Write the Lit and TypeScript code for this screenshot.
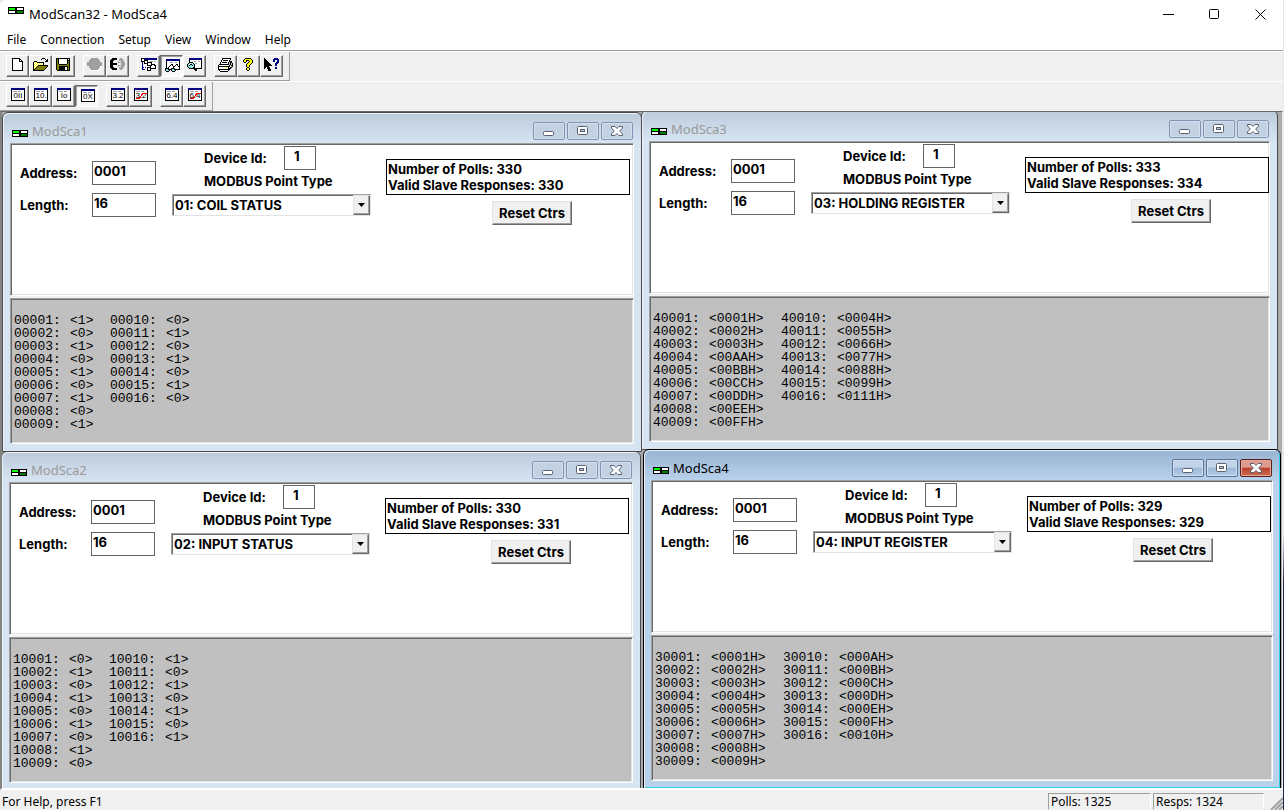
import { LitElement, html, svg, css } from "lit";
import { customElement, property } from "lit/decorators.js";
import { classMap } from "lit/directives/class-map.js";

const PALETTE: Record<string, string> = {
  k: "#000000", w: "#ffffff", n: "#000080", g: "#a0a0a0", l: "#c0c0c0",
  y: "#ffff00", o: "#808000", r: "#ff0000", c: "#80e0e0",
};

/* Turns rows of palette keys into runs of one-pixel-high rectangles. */
function bitmap(rows: string[]) {
  const runs: unknown[] = [];
  rows.forEach((row, y) => {
    let x = 0;
    while (x < row.length) {
      const key = row[x];
      let end = x + 1;
      while (end < row.length && row[end] === key) end++;
      if (PALETTE[key]) {
        runs.push(svg`<rect x=${x} y=${y} width=${end - x} height="1" fill=${PALETTE[key]}></rect>`);
      }
      x = end;
    }
  });
  return html`<svg width="16" height="16" viewBox="0 0 16 16" shape-rendering="crispEdges" aria-hidden="true">${runs}</svg>`;
}

const BITMAPS: Record<string, string[]> = {
  new: [
    "..kkkkkkkk......",
    "..kwwwwwwkk.....",
    "..kwwwwwwkwk....",
    "..kwwwwwwkkkk...",
    "..kwwwwwwwwwk...",
    "..kwwwwwwwwwk...",
    "..kwwwwwwwwwk...",
    "..kwwwwwwwwwk...",
    "..kwwwwwwwwwk...",
    "..kwwwwwwwwwk...",
    "..kwwwwwwwwwk...",
    "..kwwwwwwwwwk...",
    "..kkkkkkkkkkk...",
  ],
  open: [
    ".........kkk....",
    "........k...k.k.",
    ".............kk.",
    ".kkk........kkk.",
    "kywykkkkkkk.....",
    "kwywywywywk.....",
    "kywywywywyk.....",
    "kwywykkkkkkkkkk.",
    "kywykoooooooook.",
    "kwykoooooooook..",
    "kykoooooooook...",
    "kkoooooooook....",
    "kkkkkkkkkkk.....",
  ],
  save: [
    "kkkkkkkkkkkkkk..",
    "kokwwwwwwwwkwk..",
    "kokwwwwwwwwkkk..",
    "kokwwwwwwwwkok..",
    "kokwwwwwwwwkok..",
    "kokwwwwwwwwkok..",
    "kookkkkkkkkook..",
    "kooooooooooook..",
    "kookkkkkkkkkok..",
    "kookkkkkkwwkok..",
    "kookkkkkkwwkok..",
    "kookkkkkkwwkok..",
    ".kkkkkkkkkkkkk..",
  ],
  connect: [
    "....ggggggg.....",
    "...ggggggggg....",
    "..ggggggggggg...",
    "..gggggggggggw..",
    "ggggggggggggggg.",
    "ggggggggggggggg.",
    "ggggggggggggggg.",
    "ggggggggggggggg.",
    "..gggggggggggww.",
    "..gggggggggggw..",
    "...gggggggggww..",
    "....gggggggww...",
    ".....wwwwwww....",
  ],
  disconnect: [
    "..kkkkk...gg....",
    ".kkkkkk..gggg...",
    "kkkk.....ggggg..",
    "kkk.....g..ggg..",
    "kkk.....ggggggg.",
    "kkkkkkk....gggg.",
    "kkkkkkk....gggg.",
    "kkk.....ggggggg.",
    "kkk.....g..ggg..",
    "kkkk.....ggggg..",
    ".kkkkkk..gggg...",
    "..kkkkk...gg....",
  ],
  point: [
    "kkkknnnnnnnnnnnn",
    "kwwknnnnnnnnnnnn",
    "kwwkkkkwwwwwwwww",
    "kkkkwwkwwgggwggw",
    ".n.kwwkkkkkwwwww",
    ".n.kkkkwwwkwwwww",
    ".n.w.wkwwwkkkkww",
    ".n.w.wkkkkkwwkkw",
    ".n.w.w.w.kwwwwkw",
    ".nnwnwkkkkwwwwkw",
    ".n.w.wkwwkkkkkkw",
    ".nnn.wkwwk......",
    "......kkkk......",
  ],
  watch: [
    ".nnnnnnnnnnnnnn.",
    ".nnnnnnnnnnnnnn.",
    ".kwwwwwwwwwwwwk.",
    ".kwwwgggwwggwwk.",
    ".kwwwwwwwwwwwwk.",
    ".kwwwwkkwwwkkwk.",
    ".kwwwkwkwwkwkwk.",
    ".kwwkwwwkkwwwkk.",
    ".kwkwwwwkwwwwwk.",
    "kkkkwwkkkkwwwwk.",
    "kcckkkkcckkkkkk.",
    "kccck.kccck.....",
    ".kkk...kkk......",
  ],
  inspect: [
    "..nnnnnnnnnnnnn.",
    "..nnnnnnnnnnnnn.",
    "..kwwwwwwwwwwwk.",
    "..kwwwwggwwggwk.",
    "..kkkkwwwwwwwwk.",
    ".kcwcckwggwwwwk.",
    "kcwkkcckwwwwwwk.",
    "kckcckckwwwwwwk.",
    "kccccwckwwwwwwk.",
    ".kccwckkwwwwwwk.",
    "..kkkkkkkkkkkkk.",
    ".......kkk......",
    "........kk......",
  ],
  print: [
    "....kkkkkkkkk...",
    "....kwwwwwwwk...",
    "...kwkkkkkwk....",
    "...kwwwwwwwkkk..",
    "..kwkkkkkwklkk..",
    "..kwwwwwwwklklk.",
    ".kkkkkkkkkklklk.",
    "kwwwwwwwwwwklkk.",
    "kkkkkkkkkkkkwlk.",
    "kwwwwwwyywkwkk..",
    "kwwwwwwwwwkkk...",
    "kkkkkkkkkkkk....",
    ".kwwwwwwwwk.....",
    "..kkkkkkkk......",
  ],
  about: [
    "....kkkkkk......",
    "...kyyyyyyk.....",
    "..kyykkkyyyk....",
    "..kyyk..kyyk....",
    "...kk..kyyyk....",
    "......kyyyk.....",
    ".....kyyyk......",
    ".....kyyk.......",
    ".....kyyk.......",
    "......kk........",
    ".....kyyk.......",
    ".....kyyk.......",
    "......kk........",
  ],
  context: [
    "k.........nnnn..",
    "kk.......nnnnnn.",
    "kkk......nn..nn.",
    "kkkk.....nn..nn.",
    "kkkkk.......nnn.",
    "kkkkkk.....nnn..",
    "kkkkkkk....nn...",
    "kkkkkkkk...nn...",
    "kkkkk...........",
    "kk.kkk.....nn...",
    "k..kkk.....nn...",
    "....kkk.........",
    "....kkk.........",
  ],
};

/* A small data window carrying a caption of the number format. */
function formatIcon(caption: string, struck = false) {
  return html`<svg width="16" height="16" viewBox="0 0 16 16" shape-rendering="crispEdges" aria-hidden="true">
    <rect x="1" y="0" width="14" height="13" fill="#000000"></rect>
    <rect x="2" y="2" width="12" height="10" fill="#ffffff"></rect>
    <rect x="1" y="0" width="14" height="2" fill="#000080"></rect>
    <rect x="3" y="3" width="4" height="1" fill="#a0a0a0"></rect>
    <rect x="8" y="3" width="3" height="1" fill="#a0a0a0"></rect>
    <text class="caption" x="8" y="10" text-anchor="middle">${caption}</text>
    ${struck ? svg`<path d="M3 10.5H6L10 5.5H14" stroke="#ff0000" stroke-width="1.3" fill="none"></path>` : null}
  </svg>`;
}

const logo = html`<svg class="logo" width="16" height="7" viewBox="0 0 16 7" shape-rendering="crispEdges" aria-hidden="true">
  <rect width="16" height="7" fill="#000000"></rect>
  <rect x="1" y="1" width="6" height="2" fill="#00ff00"></rect>
  <rect x="1" y="4" width="6" height="2" fill="#ffffff"></rect>
  <rect x="9" y="1" width="6" height="2" fill="#ffffff"></rect>
  <rect x="9" y="4" width="6" height="2" fill="#008000"></rect>
</svg>`;

interface Tool { name: string; icon: unknown; pressed?: boolean; disabled?: boolean }

const STANDARD: Tool[][] = [
  [
    { name: "New", icon: bitmap(BITMAPS.new) },
    { name: "Open", icon: bitmap(BITMAPS.open) },
    { name: "Save", icon: bitmap(BITMAPS.save) },
  ],
  [
    { name: "Connect", icon: bitmap(BITMAPS.connect), disabled: true },
    { name: "Disconnect", icon: bitmap(BITMAPS.disconnect) },
  ],
  [
    { name: "Data definition", icon: bitmap(BITMAPS.point) },
    { name: "Show data", icon: bitmap(BITMAPS.watch), pressed: true },
    { name: "Show traffic", icon: bitmap(BITMAPS.inspect) },
  ],
  [
    { name: "Print", icon: bitmap(BITMAPS.print) },
    { name: "About", icon: bitmap(BITMAPS.about) },
    { name: "Context help", icon: bitmap(BITMAPS.context) },
  ],
];

const FORMATS: Tool[][] = [
  [
    { name: "Binary", icon: formatIcon("0II") },
    { name: "Decimal", icon: formatIcon("10.") },
    { name: "Integer", icon: formatIcon("Io") },
    { name: "Hex", icon: formatIcon("0X"), pressed: true },
  ],
  [
    { name: "Floating point", icon: formatIcon("3.2") },
    { name: "Swapped floating point", icon: formatIcon("3.2", true) },
  ],
  [
    { name: "Double precision", icon: formatIcon("6.4") },
    { name: "Swapped double precision", icon: formatIcon("6.4", true) },
  ],
];

const POINT_TYPES = ["01: COIL STATUS", "02: INPUT STATUS", "03: HOLDING REGISTER", "04: INPUT REGISTER"];

interface Session {
  title: string; type: number; polls: number; responses: number;
  base: number; values: string[]; place: string; active?: boolean;
}

const SESSIONS: Session[] = [
  { title: "ModSca3", type: 2, polls: 333, responses: 334, base: 40001, place: "upper-right",
    values: "0001H 0002H 0003H 00AAH 00BBH 00CCH 00DDH 00EEH 00FFH 0004H 0055H 0066H 0077H 0088H 0099H 0111H".split(" ") },
  { title: "ModSca1", type: 0, polls: 330, responses: 330, base: 1, place: "upper-left",
    values: "1 0 1 0 1 0 1 0 1 0 1 0 1 0 1 0".split(" ") },
  { title: "ModSca2", type: 1, polls: 330, responses: 331, base: 10001, place: "lower-left",
    values: "0 1 0 1 0 1 0 1 0 1 0 1 0 1 0 1".split(" ") },
  { title: "ModSca4", type: 3, polls: 329, responses: 329, base: 30001, place: "lower-right", active: true,
    values: "0001H 0002H 0003H 0004H 0005H 0006H 0007H 0008H 0009H 000AH 000BH 000CH 000DH 000EH 000FH 0010H".split(" ") },
];

@customElement("scan-window")
class ScanWindow extends LitElement {
  @property({ attribute: false }) session!: Session;

  static styles = css`
    :host { display: block; }
    * { box-sizing: border-box; }
    .frame {
      height: 100%; display: flex; flex-direction: column; padding: 0 7px 7px;
      border: 1px solid #4c4c4c; border-radius: 6px 6px 0 0;
      background: linear-gradient(#bccbdc, #d7e4f2 30px);
      box-shadow: inset 1px 1px 0 #eaf1f8;
      font: bold 13px/16px Inter, "Liberation Sans", sans-serif; color: #000;
    }
    .frame.active {
      border-color: #000;
      background: linear-gradient(#98b4d2, #b9d1ea 30px);
      box-shadow: inset 1px 1px 0 #e6eff8, inset -1px -1px 0 #2fd0e4;
    }
    .title { flex: none; height: 30px; display: flex; align-items: center; padding: 6px 1px 0 2px; }
    .logo { margin-top: 5px; flex: none; }
    .name { flex: 1; margin: 0 0 0 4px; font: 13px/18px "Noto Sans", sans-serif; color: #999; }
    .active .name { color: #000; }
    .caption-buttons { display: flex; gap: 2px; }
    .caption-button {
      width: 32px; height: 18px; padding: 0; display: grid; place-items: center;
      border: 1px solid #8493b3; border-radius: 2px; background: #c3d2e3;
      box-shadow: inset 0 0 0 1px #d3dfec;
    }
    .active .caption-button {
      border-color: #5d7496; background: linear-gradient(#c1d4e8 45%, #9db9d8 50%, #b4cce6);
      box-shadow: inset 0 0 0 1px #d0e0f0;
    }
    .active .close {
      border-color: #5b1f22; background: linear-gradient(#dd9a8e 45%, #bb3f2c 50%, #cc6a4e);
      box-shadow: inset 0 0 0 1px #e0a79c;
    }
    .pane {
      border: 1px solid; border-color: #a0a0a0 #fff #fff #a0a0a0;
      box-shadow: inset 1px 1px 0 #696969, inset -1px -1px 0 #e3e3e3;
    }
    .setup {
      flex: 1 1 153px; min-height: 0; overflow: hidden; background: #fff; padding: 1px 1px 1px 9px;
      display: grid; grid-template-columns: 136px 199px 244px; column-gap: 16px; align-content: start;
    }
    .split { flex: none; height: 2px; background: #f0f0f0; }
    .data {
      flex: 1 1 146px; min-height: 0; overflow: hidden; background: #c0c0c0; padding: 15px 3px;
      display: flex; gap: 16px;
      font: 13px/13px "Liberation Mono", "Courier New", monospace;
    }
    .registers { margin: 0; padding: 0; list-style: none; }
    .register { display: grid; grid-template-columns: 56px auto; }
    .wide { min-width: 56px; }
    .bit { min-width: 24px; }
    .range { display: grid; row-gap: 8px; padding-top: 16px; align-content: start; }
    .field { display: grid; grid-template-columns: 72px 64px; align-items: center; }
    .entry {
      width: 100%; height: 24px; border: 1px solid #646464; background: #fff; color: #000;
      padding: 0 1px 4px; font: inherit; border-radius: 0; outline: none;
    }
    .device { display: flex; align-items: center; padding: 1px 0 0 32px; }
    .device-label { width: 80px; }
    .device-entry { width: 32px; padding-left: 9px; }
    .type-label { display: block; padding: 3px 0 5px 32px; }
    .combo { position: relative; height: 22px; }
    .choice {
      appearance: none; width: 100%; height: 22px; padding: 0 20px 0 2px; font: inherit; color: #000;
      border: 1px solid; border-color: #a0a0a0 #e3e3e3 #e3e3e3 #a0a0a0; border-radius: 0;
      box-shadow: inset 1px 1px 0 #696969; background: #fff; outline: none;
    }
    .drop {
      position: absolute; top: 1px; right: 1px; width: 17px; height: 20px; display: grid; place-items: center;
      background: #f0f0f0; border: 1px solid; border-color: #e3e3e3 #696969 #696969 #e3e3e3;
      box-shadow: inset -1px -1px 0 #a0a0a0; pointer-events: none;
    }
    .counters { padding-top: 14px; margin: 0 1px 0 -1px; }
    .totals { border: 1px solid #000; height: 36px; padding: 1px; white-space: nowrap; overflow: hidden; }
    .reset {
      display: block; width: 80px; height: 24px; margin: 6px 0 0 106px; padding: 0; font: inherit; color: #000;
      background: #f0f0f0; border: 1px solid; border-color: #e3e3e3 #696969 #696969 #e3e3e3;
      box-shadow: inset -1px -1px 0 #a0a0a0; white-space: nowrap; border-radius: 0;
    }
  `;

  private column(from: number, to: number) {
    const { base, values } = this.session;
    const wide = values[0].length > 1;
    return html`<ul class="registers">
      ${values.slice(from, to).map((value, i) => html`<li class="register">
        <span>${String(base + from + i).padStart(5, "0")}:</span><span class=${wide ? "wide" : "bit"}>&lt;${value}&gt;</span>
      </li>`)}
    </ul>`;
  }

  render() {
    const s = this.session;
    return html`<section class=${classMap({ frame: true, active: !!s.active })}>
      <header class="title">
        ${logo}<span class="name">${s.title}</span>
        <div class="caption-buttons">
          <button class="caption-button" aria-label="Minimize">
            <svg width="12" height="10" viewBox="0 0 12 10"><rect x="0.5" y="5.5" width="10" height="4" rx="1" fill="#fff" stroke="#5a6070"></rect></svg>
          </button>
          <button class="caption-button" aria-label="Maximize">
            <svg width="12" height="10" viewBox="0 0 12 10"><rect x="0.5" y="0.5" width="10" height="8" rx="1" fill="#fff" stroke="#5a6070"></rect><rect x="3.5" y="3.5" width="4" height="2" fill="#b8c8dc" stroke="#5a6070"></rect></svg>
          </button>
          <button class="caption-button close" aria-label="Close">
            <svg width="12" height="10" viewBox="0 0 12 10"><path d="M0.5 0.5H4L6 2.5L8 0.5H11.5V2L8.7 5L11.5 8V9.5H8L6 7.5L4 9.5H0.5V8L3.3 5L0.5 2Z" fill="#fff" stroke="#5a6070"></path></svg>
          </button>
        </div>
      </header>
      <form class="pane setup" @submit=${(e: Event) => e.preventDefault()}>
        <div class="range">
          <div class="field"><label for="address">Address:</label><input class="entry" id="address" value="0001"></div>
          <div class="field"><label for="length">Length:</label><input class="entry" id="length" value="16"></div>
        </div>
        <div>
          <div class="device"><label class="device-label" for="device">Device Id:</label><input class="entry device-entry" id="device" value="1"></div>
          <label class="type-label" for="type">MODBUS Point Type</label>
          <div class="combo">
            <select class="choice" id="type">
              ${POINT_TYPES.map((t, i) => html`<option ?selected=${i === s.type}>${t}</option>`)}
            </select>
            <span class="drop"><svg width="7" height="4" viewBox="0 0 7 4"><path d="M0 0H7L3.5 4Z"></path></svg></span>
          </div>
        </div>
        <div class="counters">
          <div class="totals">Number of Polls: ${s.polls}<br>Valid Slave Responses: ${s.responses}</div>
          <button class="reset" type="button">Reset Ctrs</button>
        </div>
      </form>
      <div class="split"></div>
      <div class="pane data">${this.column(0, 9)}${this.column(9, 16)}</div>
    </section>`;
  }
}

@customElement("app-root")
class AppRoot extends LitElement {
  static styles = css`
    :host {
      display: flex; flex-direction: column; height: 100vh; box-sizing: border-box; padding-right: 1px;
      background: linear-gradient(#e4e9ee 66%, #1b2350 72%);
      font: 12px/16px "Noto Sans", sans-serif; color: #000;
    }
    * { box-sizing: border-box; }
    .titlebar { flex: none; height: 29px; display: flex; background: #fff; padding-left: 8px; border-top-left-radius: 6px; }
    .logo { margin-top: 7px; flex: none; }
    .app-name { flex: 1; margin: 0 0 0 5px; font: 13px/29px "Noto Sans", sans-serif; }
    .system { width: 46px; border: 0; padding: 0; background: none; display: grid; place-items: center; }
    .menu { flex: none; height: 22px; display: flex; gap: 14px; padding: 0 7px; background: #fff; border-bottom: 1px solid #a0a0a0; }
    .menu-item { border: 0; padding: 0; background: none; font: inherit; color: inherit; height: 21px; }
    .band { flex: none; height: 30px; background: #f0f0f0; display: flex; border-top: 1px solid #fff; }
    .bar { display: flex; gap: 8px; padding: 3px 6px; border-right: 1px solid #a0a0a0; border-bottom: 1px solid #a0a0a0; }
    .group { display: flex; }
    .tool {
      width: 23px; height: 22px; padding: 0 0 0 1px; display: grid; place-items: center; background: #f0f0f0;
      border: 1px solid; border-color: #fff #696969 #696969 #fff; box-shadow: inset -1px -1px 0 #a0a0a0; border-radius: 0;
    }
    .tool.pressed {
      padding: 2px 0 0 2px; border-color: #696969 #fff #fff #696969; box-shadow: inset 1px 1px 0 #a0a0a0;
      background: repeating-conic-gradient(#fff 0 25%, #f0f0f0 0 50%) 0 0 / 2px 2px;
    }
    .caption { font: 8px "Liberation Sans", Arial, sans-serif; fill: #000; }
    .desktop {
      flex: 1; min-height: 0; position: relative; overflow: hidden; background: #ababab;
      border: solid; border-color: #696969 #f0f0f0 #fff #838383; border-width: 1px 1px 2px 2px;
    }
    .child { position: absolute; width: 50%; height: calc(50% + 2px); }
    .upper-left { left: 0; top: 0; }
    .upper-right { left: calc(50% - 1px); top: -2px; width: calc(50% - 3px); }
    .lower-left { left: -1px; top: calc(50% + 1px); }
    .lower-right { left: calc(50% + 1px); top: calc(50% - 1px); width: calc(50% - 2px); }
    .status { flex: none; height: 20px; display: flex; gap: 2px; align-items: stretch; background: #f0f0f0; line-height: 19px; padding: 2px 0 0 2px; white-space: nowrap; }
    .hint { flex: 1; }
    .pane { width: 103px; padding-left: 2px; border: 1px solid; border-color: #a0a0a0 #fff #f0f0f0 #a0a0a0; line-height: 16px; margin-top: 1px; }
    .replies { width: 111px; }
    .grip { width: 17px; display: grid; place-items: end; }
  `;

  private toolbar(label: string, groups: Tool[][]) {
    return html`<div class="band"><div class="bar" role="toolbar" aria-label=${label}>
      ${groups.map((group) => html`<div class="group">
        ${group.map((t) => html`<button class=${classMap({ tool: true, pressed: !!t.pressed })} aria-label=${t.name} ?disabled=${!!t.disabled}>${t.icon}</button>`)}
      </div>`)}
    </div></div>`;
  }

  render() {
    return html`
      <header class="titlebar">
        ${logo}<h1 class="app-name">ModScan32 - ModSca4</h1>
        <button class="system" aria-label="Minimize"><svg width="11" height="11" viewBox="0 0 11 11"><path d="M0 5.5H11" stroke="#000"></path></svg></button>
        <button class="system" aria-label="Maximize"><svg width="11" height="11" viewBox="0 0 11 11"><rect x="0.5" y="0.5" width="9" height="9" rx="1" fill="none" stroke="#000"></rect></svg></button>
        <button class="system" aria-label="Close"><svg width="11" height="11" viewBox="0 0 11 11"><path d="M0.5 0.5L10.5 10.5M10.5 0.5L0.5 10.5" stroke="#000"></path></svg></button>
      </header>
      <nav class="menu">
        ${["File", "Connection", "Setup", "View", "Window", "Help"].map((m) => html`<button class="menu-item">${m}</button>`)}
      </nav>
      ${this.toolbar("Standard", STANDARD)}
      ${this.toolbar("Display format", FORMATS)}
      <main class="desktop">
        ${SESSIONS.map((s) => html`<scan-window class="child ${s.place}" .session=${s}></scan-window>`)}
      </main>
      <footer class="status">
        <span class="hint">For Help, press F1</span>
        <span class="pane">Polls: 1325</span>
        <span class="pane replies">Resps: 1324</span>
        <span class="grip"><svg width="13" height="13" viewBox="0 0 13 13"><path d="M1 13L13 1M5 13L13 5M9 13L13 9" stroke="#a0a0a0" stroke-width="2"></path></svg></span>
      </footer>`;
  }
}
